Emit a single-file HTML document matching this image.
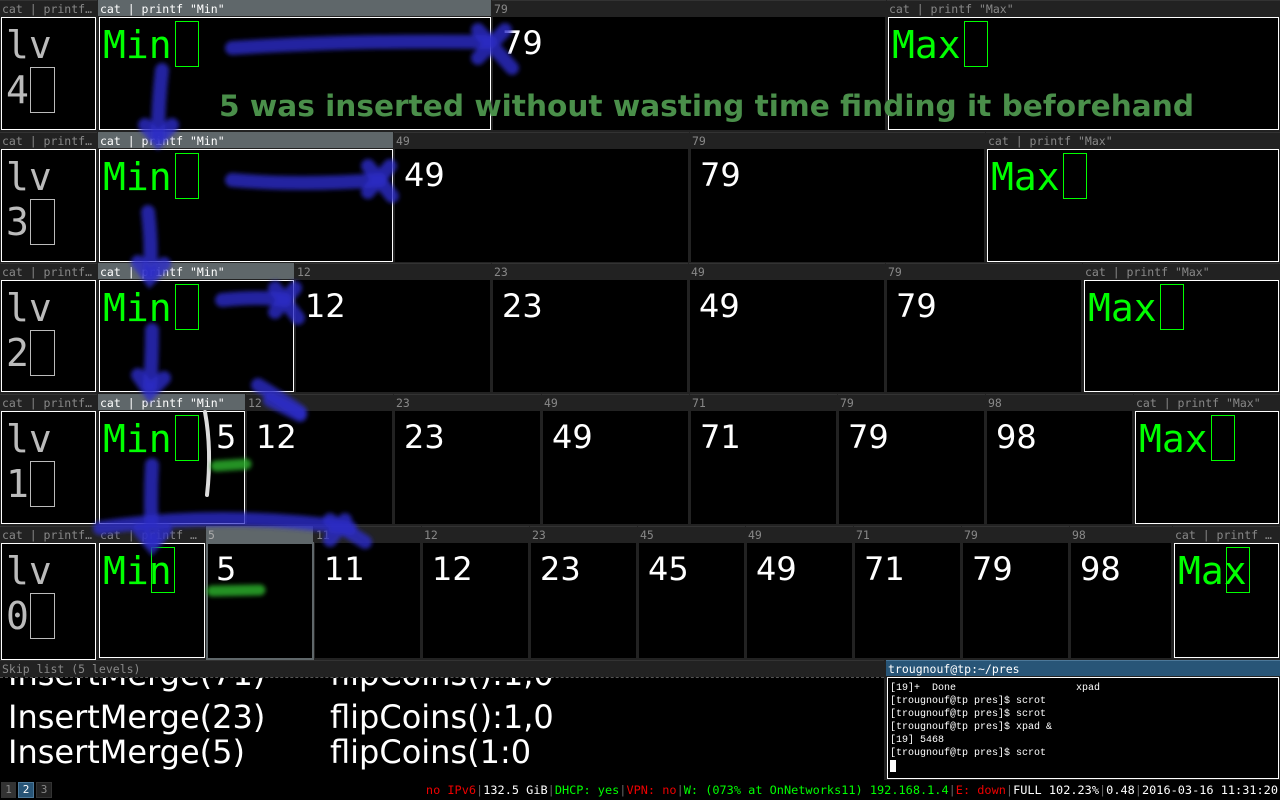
<!DOCTYPE html>
<html><head><meta charset="utf-8"><style>
*{margin:0;padding:0;box-sizing:border-box}
body{width:1280px;height:800px;background:#222;position:relative;overflow:hidden;font-family:"DejaVu Sans Mono","Liberation Mono",monospace}
.t{position:absolute;height:16px;background:#222;color:#888;font-size:11.5px;line-height:16px;padding-left:2px;white-space:nowrap;overflow:hidden;border-top:1px solid #333}
.t.a{background:#5f676a;color:#fff;border-top:1px solid #5f676a}
.b{position:absolute;background:#000;border:1px solid #000}
.b.f{border:1px solid #fff}
.b.g{border:2px solid #5f676a}
.m{position:absolute;left:3px;top:8px;font-size:38px;line-height:38px;color:#0f0;white-space:nowrap}
.c{position:absolute;width:24px;height:46px;border:1px solid #0f0;top:3px}
.n{position:absolute;left:8px;top:9px;font-size:32px;line-height:32px;color:#fff;font-family:"DejaVu Sans",sans-serif}
.lv{position:absolute;left:4px;top:10px;font-size:38px;line-height:45px;color:#bbb;margin-top:-5px}
.lb{position:absolute;left:28px;top:49px;width:25px;height:46px;border:1px solid #bbb}
</style></head><body>

<!-- ROW 4 -->
<div class="t" style="left:0;top:0;width:97px">cat | printf…</div>
<div class="b f" style="left:1px;top:17px;width:95px;height:113px"><div class="lv">lv<br>4</div><div class="lb"></div></div>
<div class="t a" style="left:98px;top:0;width:393px">cat | printf "Min"</div>
<div class="b f" style="left:99px;top:17px;width:392px;height:113px"><div class="m">Min</div><div class="c" style="left:75px"></div></div>
<div class="t" style="left:492px;top:0;width:394px">79</div>
<div class="b" style="left:493px;top:17px;width:392px;height:113px"><div class="n">79</div></div>
<div class="t" style="left:887px;top:0;width:393px">cat | printf "Max"</div>
<div class="b f" style="left:888px;top:17px;width:391px;height:113px"><div class="m">Max</div><div class="c" style="left:75px"></div></div>

<!-- ROW 3 -->
<div class="t" style="left:0;top:132px;width:97px">cat | printf…</div>
<div class="b f" style="left:1px;top:149px;width:95px;height:113px"><div class="lv">lv<br>3</div><div class="lb"></div></div>
<div class="t a" style="left:98px;top:132px;width:295px">cat | printf "Min"</div>
<div class="b f" style="left:99px;top:149px;width:294px;height:113px"><div class="m">Min</div><div class="c" style="left:75px"></div></div>
<div class="t" style="left:394px;top:132px;width:295px">49</div>
<div class="b" style="left:395px;top:149px;width:293px;height:113px"><div class="n">49</div></div>
<div class="t" style="left:690px;top:132px;width:295px">79</div>
<div class="b" style="left:691px;top:149px;width:293px;height:113px"><div class="n">79</div></div>
<div class="t" style="left:986px;top:132px;width:294px">cat | printf "Max"</div>
<div class="b f" style="left:987px;top:149px;width:292px;height:113px"><div class="m">Max</div><div class="c" style="left:75px"></div></div>

<!-- ROW 2 -->
<div class="t" style="left:0;top:263px;width:97px">cat | printf…</div>
<div class="b f" style="left:1px;top:280px;width:95px;height:112px"><div class="lv">lv<br>2</div><div class="lb"></div></div>
<div class="t a" style="left:98px;top:263px;width:196px">cat | printf "Min"</div>
<div class="b f" style="left:99px;top:280px;width:195px;height:112px"><div class="m">Min</div><div class="c" style="left:75px"></div></div>
<div class="t" style="left:295px;top:263px;width:196px">12</div>
<div class="b" style="left:296px;top:280px;width:194px;height:112px"><div class="n">12</div></div>
<div class="t" style="left:492px;top:263px;width:196px">23</div>
<div class="b" style="left:493px;top:280px;width:194px;height:112px"><div class="n">23</div></div>
<div class="t" style="left:689px;top:263px;width:196px">49</div>
<div class="b" style="left:690px;top:280px;width:194px;height:112px"><div class="n">49</div></div>
<div class="t" style="left:886px;top:263px;width:196px">79</div>
<div class="b" style="left:887px;top:280px;width:194px;height:112px"><div class="n">79</div></div>
<div class="t" style="left:1083px;top:263px;width:197px">cat | printf "Max"</div>
<div class="b f" style="left:1084px;top:280px;width:195px;height:112px"><div class="m">Max</div><div class="c" style="left:75px"></div></div>

<!-- ROW 1 -->
<div class="t" style="left:0;top:394px;width:97px">cat | printf…</div>
<div class="b f" style="left:1px;top:411px;width:95px;height:113px"><div class="lv">lv<br>1</div><div class="lb"></div></div>
<div class="t a" style="left:98px;top:394px;width:147px">cat | printf "Min"</div>
<div class="b f" style="left:99px;top:411px;width:146px;height:113px"><div class="m">Min</div><div class="c" style="left:75px"></div><div class="n" style="left:116px;font-size:32px">5</div></div>
<div class="t" style="left:246px;top:394px;width:147px">12</div>
<div class="b" style="left:247px;top:411px;width:145px;height:113px"><div class="n">12</div></div>
<div class="t" style="left:394px;top:394px;width:147px">23</div>
<div class="b" style="left:395px;top:411px;width:145px;height:113px"><div class="n">23</div></div>
<div class="t" style="left:542px;top:394px;width:147px">49</div>
<div class="b" style="left:543px;top:411px;width:145px;height:113px"><div class="n">49</div></div>
<div class="t" style="left:690px;top:394px;width:147px">71</div>
<div class="b" style="left:691px;top:411px;width:145px;height:113px"><div class="n">71</div></div>
<div class="t" style="left:838px;top:394px;width:147px">79</div>
<div class="b" style="left:839px;top:411px;width:145px;height:113px"><div class="n">79</div></div>
<div class="t" style="left:986px;top:394px;width:147px">98</div>
<div class="b" style="left:987px;top:411px;width:145px;height:113px"><div class="n">98</div></div>
<div class="t" style="left:1134px;top:394px;width:146px">cat | printf "Max"</div>
<div class="b f" style="left:1135px;top:411px;width:144px;height:113px"><div class="m">Max</div><div class="c" style="left:75px"></div></div>

<!-- ROW 0 -->
<div class="t" style="left:0;top:526px;width:97px">cat | printf…</div>
<div class="b f" style="left:1px;top:543px;width:95px;height:117px"><div class="lv">lv<br>0</div><div class="lb"></div></div>
<div class="t" style="left:98px;top:526px;width:107px">cat | printf …</div>
<div class="b f" style="left:99px;top:543px;width:106px;height:115px"><div class="m">Min</div><div class="c" style="left:51px"></div></div>
<div class="t a" style="left:206px;top:526px;width:107px;background:#5f676a;color:#aaa">5</div>
<div class="b g" style="left:206px;top:542px;width:108px;height:118px"><div class="n">5</div></div>
<div class="t" style="left:314px;top:526px;width:107px">11</div>
<div class="b" style="left:315px;top:543px;width:105px;height:115px"><div class="n">11</div></div>
<div class="t" style="left:422px;top:526px;width:107px">12</div>
<div class="b" style="left:423px;top:543px;width:105px;height:115px"><div class="n">12</div></div>
<div class="t" style="left:530px;top:526px;width:107px">23</div>
<div class="b" style="left:531px;top:543px;width:105px;height:115px"><div class="n">23</div></div>
<div class="t" style="left:638px;top:526px;width:107px">45</div>
<div class="b" style="left:639px;top:543px;width:105px;height:115px"><div class="n">45</div></div>
<div class="t" style="left:746px;top:526px;width:107px">49</div>
<div class="b" style="left:747px;top:543px;width:105px;height:115px"><div class="n">49</div></div>
<div class="t" style="left:854px;top:526px;width:107px">71</div>
<div class="b" style="left:855px;top:543px;width:105px;height:115px"><div class="n">71</div></div>
<div class="t" style="left:962px;top:526px;width:107px">79</div>
<div class="b" style="left:963px;top:543px;width:105px;height:115px"><div class="n">79</div></div>
<div class="t" style="left:1070px;top:526px;width:102px">98</div>
<div class="b" style="left:1071px;top:543px;width:100px;height:115px"><div class="n">98</div></div>
<div class="t" style="left:1173px;top:526px;width:107px">cat | printf …</div>
<div class="b f" style="left:1174px;top:543px;width:105px;height:115px"><div class="m">Max</div><div class="c" style="left:51px"></div></div>

<!-- overlay text -->
<div style="position:absolute;left:219px;top:88px;font-family:'DejaVu Sans',sans-serif;font-weight:bold;font-size:29.6px;line-height:36px;color:#4a8f4a;white-space:nowrap">5 was inserted without wasting time finding it beforehand</div>

<!-- strokes -->
<svg style="position:absolute;left:0;top:0" width="1280" height="800">
<defs><filter id="bl" filterUnits="userSpaceOnUse" x="0" y="0" width="1280" height="800"><feGaussianBlur stdDeviation="2"/></filter></defs>
<g fill="none" stroke="rgba(45,45,200,0.8)" stroke-width="14" stroke-linecap="round" filter="url(#bl)">
<path d="M232 48 Q350 40 490 42"/><path d="M478 30 L512 68 M505 30 L478 58"/>
<path d="M162 70 Q158 105 158 135"/><path d="M145 125 L158 140 L172 125"/>
<path d="M232 180 Q300 186 380 180"/><path d="M368 166 L392 196 M390 166 L368 192"/>
<path d="M148 212 Q152 245 150 272"/><path d="M138 262 L150 278 L164 264"/>
<path d="M222 300 Q260 296 285 300"/><path d="M275 288 L298 318 M295 288 L275 312"/>
<path d="M152 330 Q152 360 150 386"/><path d="M138 375 L150 392 L164 378"/>
<path d="M258 385 Q280 398 300 412"/><path d="M270 400 L300 415"/>
<path d="M152 465 Q150 500 152 540"/><path d="M140 530 L152 545 L165 530"/>
<path d="M100 528 Q220 510 350 528"/><path d="M330 520 L365 542 M345 520 L330 540"/>
</g>
<g stroke-linecap="round" fill="none">
<path d="M205 412 Q212 450 207 495" stroke="#ddd" stroke-width="4"/>
<path d="M216 466 L246 464" stroke="rgba(40,170,40,0.85)" stroke-width="11" filter="url(#bl)"/>
<path d="M212 591 L260 590" stroke="rgba(40,170,40,0.85)" stroke-width="11" filter="url(#bl)"/>
</g>
</svg>

<!-- bottom skip list -->
<div class="t" style="left:0;top:660px;width:884px">Skip list (5 levels)</div>
<div style="position:absolute;left:0;top:677px;width:884px;height:103px;background:#000;border-top:1px dashed #555;overflow:hidden;font-family:'DejaVu Sans',sans-serif;font-size:32px;color:#fff;line-height:36px">
<div style="position:absolute;left:8px;top:-22px">InsertMerge(71)</div><div style="position:absolute;left:330px;top:-22px">flipCoins():1,0</div>
<div style="position:absolute;left:8px;top:21px">InsertMerge(23)</div><div style="position:absolute;left:330px;top:21px">flipCoins():1,0</div>
<div style="position:absolute;left:8px;top:56px">InsertMerge(5)</div><div style="position:absolute;left:330px;top:56px">flipCoins(1:0</div>
</div>
<div class="t" style="left:886px;top:660px;width:394px;background:#285577;color:#fff;border-top:1px solid #4c7899">trougnouf@tp:~/pres</div>
<div style="position:absolute;left:887px;top:677px;width:392px;height:102px;background:#000;border:1px solid #fff;padding:4px 0 0 2px;font-family:'Liberation Mono',monospace;font-size:10px;line-height:13px;color:#fff;white-space:pre">[19]+  Done                    xpad
[trougnouf@tp pres]$ scrot
[trougnouf@tp pres]$ scrot
[trougnouf@tp pres]$ xpad &amp;
[19] 5468
[trougnouf@tp pres]$ scrot
<span style="display:inline-block;width:6px;height:12px;background:#fff"></span></div>

<!-- status bar -->
<div style="position:absolute;left:0;top:780px;width:1280px;height:20px;background:#000">
<div style="position:absolute;left:1px;top:2px;width:15px;height:16px;background:#333;border:1px solid #333;color:#888;font-size:11px;line-height:14px;text-align:center">1</div>
<div style="position:absolute;left:18px;top:2px;width:16px;height:16px;background:#285577;border:1px solid #4c7899;color:#fff;font-size:11px;line-height:14px;text-align:center">2</div>
<div style="position:absolute;left:36px;top:2px;width:16px;height:16px;background:#222;border:1px solid #333;color:#888;font-size:11px;line-height:14px;text-align:center">3</div>
<div style="position:absolute;right:2px;top:3px;font-size:11.9px;line-height:14px;white-space:pre;color:#fff"><span style="color:#e00">no IPv6</span><span style="color:#666">|</span>132.5 GiB<span style="color:#666">|</span><span style="color:#0f0">DHCP: yes</span><span style="color:#666">|</span><span style="color:#e00">VPN: no</span><span style="color:#666">|</span><span style="color:#0f0">W: (073% at OnNetworks11) 192.168.1.4</span><span style="color:#666">|</span><span style="color:#e00">E: down</span><span style="color:#666">|</span>FULL 102.23%<span style="color:#666">|</span>0.48<span style="color:#666">|</span>2016-03-16 11:31:20</div>
</div>
</body></html>
